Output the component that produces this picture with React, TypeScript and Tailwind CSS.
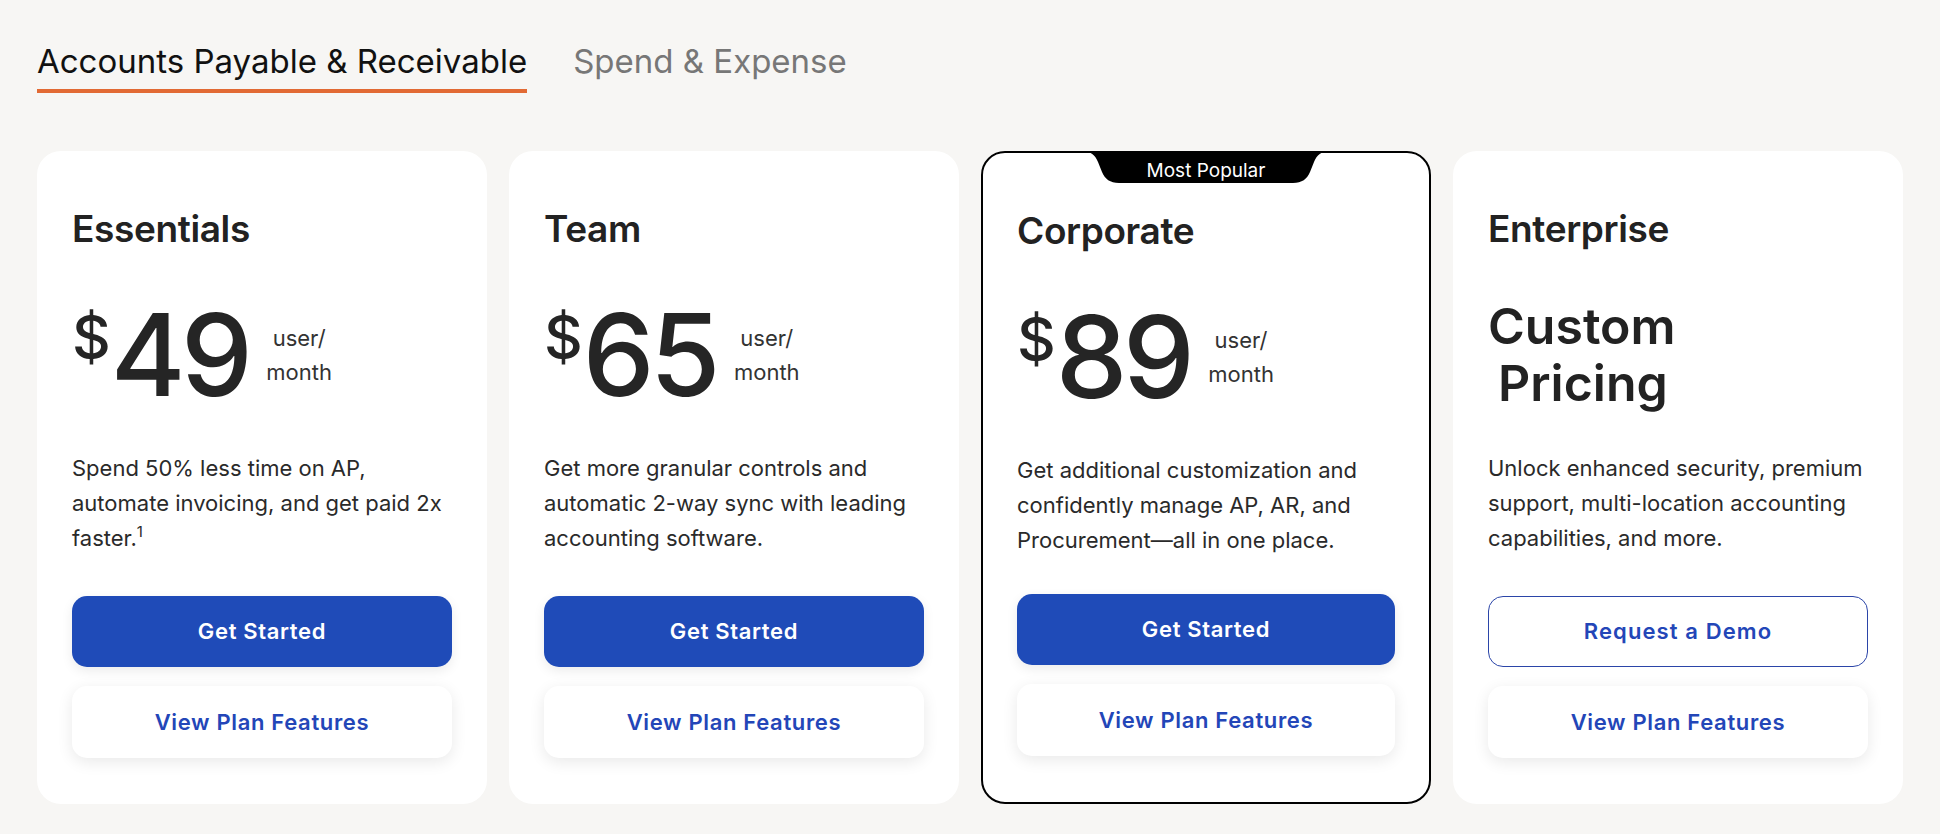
import React from 'react';

type Plan = {
  name: string;
  price?: string;
  lines: React.ReactNode[];
  primary: string;
  outline?: boolean;
  popular?: boolean;
};

const plans: Plan[] = [
  {
    name: 'Essentials',
    price: '49',
    lines: [
      'Spend 50% less time on AP,',
      'automate invoicing, and get paid 2x',
      <>
        faster.<sup className="text-[15px] relative -top-[9px] align-baseline">1</sup>
      </>,
    ],
    primary: 'Get Started',
  },
  {
    name: 'Team',
    price: '65',
    lines: ['Get more granular controls and', 'automatic 2-way sync with leading', 'accounting software.'],
    primary: 'Get Started',
  },
  {
    name: 'Corporate',
    price: '89',
    lines: ['Get additional customization and', 'confidently manage AP, AR, and', 'Procurement\u2014all in one place.'],
    primary: 'Get Started',
    popular: true,
  },
  {
    name: 'Enterprise',
    lines: ['Unlock enhanced security, premium', 'support, multi-location accounting', 'capabilities, and more.'],
    primary: 'Request a Demo',
    outline: true,
  },
];

const PopularNotch = () => (
  <div className="absolute -top-[2px] left-1/2 -translate-x-1/2 w-[248px] h-[32px]">
    <svg width="248" height="32" viewBox="0 0 248 32" className="absolute inset-0">
      <path
        d="M0 0 C9 0 13 4 16 11 L20 21 C23 28 28 32 37 32 H211 C220 32 225 28 228 21 L232 11 C235 4 239 0 248 0 Z"
        fill="#000"
      />
    </svg>
    <span className="relative block text-center text-white text-[19px] leading-[22px] pt-[9px]">
      Most Popular
    </span>
  </div>
);

const PlanCard = ({ plan }: { plan: Plan }) => {
  return (
    <div
      className={
        'relative flex flex-col w-[450px] h-[653px] rounded-[24px] bg-white pt-[55px] ' +
        (plan.popular ? 'border-2 border-black px-[34px]' : 'px-[35px]')
      }
    >
      {plan.popular && <PopularNotch />}

      <h2 className="text-[37px] leading-[46px] font-semibold text-[#222] tracking-[-0.01em]">{plan.name}</h2>

      {/* price */}
      <div className="mt-[46px] h-[114px] flex items-center">
        {plan.price ? (
          <>
            <div className="flex items-start text-[#252525]">
              <span className="text-[60px] leading-none mt-[9px] font-medium">$</span>
              <span className="text-[114px] leading-[114px] font-medium tracking-[-0.04em]">{plan.price}</span>
            </div>
            <div className="ml-[18px] text-center text-[22px] leading-[34px] text-[#333]">
              user/
              <br />
              month
            </div>
          </>
        ) : (
          <div className="text-[50px] leading-[57px] font-semibold text-[#222]">
            <span className="block">Custom</span>
            <span className="block ml-[10px]">Pricing</span>
          </div>
        )}
      </div>

      {/* description */}
      <p className="mt-[39px] h-[105px] text-[22px] leading-[35px] text-[#2a2a2a] whitespace-nowrap">
        {plan.lines.map((l, i) => (
          <span key={i} className="block">
            {l}
          </span>
        ))}
      </p>

      <div className={'flex flex-col gap-[19px] ' + (plan.popular ? 'mt-[36px]' : 'mt-[40px]')}>
        {plan.outline ? (
          <button className="h-[71px] rounded-[15px] border border-[#2b45a8] bg-white text-[#2346b8] text-[22px] font-semibold tracking-[0.05em]">
            {plan.primary}
          </button>
        ) : (
          <button className="h-[71px] rounded-[15px] bg-[#1f4bb8] text-white text-[22px] font-semibold tracking-[0.03em] shadow-[0_4px_12px_rgba(0,0,0,0.08)]">
            {plan.primary}
          </button>
        )}
        <button className="h-[72px] rounded-[15px] bg-white text-[#2346b8] text-[22px] font-semibold tracking-[0.03em] shadow-[0_4px_16px_rgba(0,0,0,0.09)]">
          View Plan Features
        </button>
      </div>
    </div>
  );
};

export default function App() {
  return (
    <div
      className="min-h-[834px] w-full bg-[#f7f6f4] px-[37px]"
      style={{ fontFamily: 'Inter, "Noto Sans", "Liberation Sans", sans-serif' }}
    >
      {/* tabs */}
      <div className="flex gap-[46px] pt-[45px]">
        <div className="flex flex-col">
          <span className="text-[33px] leading-[32px] text-[#111]">Accounts Payable &amp; Receivable</span>
          <div className="mt-[12px] h-[4px] bg-[#e26a34]" />
        </div>
        <span className="text-[33px] leading-[32px] text-[#777]">Spend &amp; Expense</span>
      </div>

      {/* plans */}
      <div className="mt-[58px] flex gap-[22px]">
        {plans.map((p) => (
          <PlanCard key={p.name} plan={p} />
        ))}
      </div>
    </div>
  );
}
